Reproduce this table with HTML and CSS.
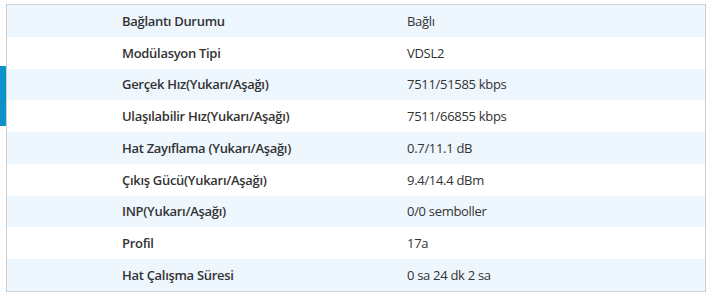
FILE: index.html
```html
<!DOCTYPE html>
<html lang="tr">
<head>
<meta charset="utf-8">
<link rel="stylesheet" href="styles.css">
</head>
<body>
<div class="page">
  <div class="side"><div class="side-mark"></div></div>
  <div class="panel">
    <div class="row"><div class="label">Bağlantı Durumu</div><div class="value">Bağlı</div></div>
    <div class="row"><div class="label">Modülasyon Tipi</div><div class="value">VDSL2</div></div>
    <div class="row"><div class="label">Gerçek Hız(Yukarı/Aşağı)</div><div class="value">7511/51585 kbps</div></div>
    <div class="row"><div class="label">Ulaşılabilir Hız(Yukarı/Aşağı)</div><div class="value">7511/66855 kbps</div></div>
    <div class="row"><div class="label">Hat Zayıflama (Yukarı/Aşağı)</div><div class="value">0.7/11.1 dB</div></div>
    <div class="row"><div class="label">Çıkış Gücü(Yukarı/Aşağı)</div><div class="value">9.4/14.4 dBm</div></div>
    <div class="row"><div class="label">INP(Yukarı/Aşağı)</div><div class="value">0/0 semboller</div></div>
    <div class="row"><div class="label">Profil</div><div class="value">17a</div></div>
    <div class="row"><div class="label">Hat Çalışma Süresi</div><div class="value">0 sa 24 dk 2 sa</div></div>
  </div>
</div>
</body>
</html>
```
FILE: styles.css
```css
html, body {
  margin: 0;
  padding: 0;
  background: #ffffff;
}
body {
  font-family: "Open Sans", "Noto Sans", "Liberation Sans", sans-serif;
  font-size: 13px;
  color: #333333;
}
.page {
  display: flex;
  align-items: flex-start;
  width: 706px;
  height: 301px;
}
.side {
  width: 6px;
  flex: none;
  padding-top: 66px;
}
.side-mark {
  width: 6px;
  height: 60px;
  background: #0e93c8;
}
.panel {
  flex: 1;
  margin-top: 4px;
  border: 1px solid #cfcfcf;
  display: flex;
  flex-direction: column;
}
.row {
  height: 31.75px;
  display: grid;
  grid-template-columns: 400px 1fr;
  align-items: center;
  background: #ffffff;
}
.row:nth-child(odd) {
  background: #eef6fe;
}
.label {
  padding-left: 115px;
  font-weight: 600;
  letter-spacing: -0.3px;
  color: #333333;
}
.value {
  letter-spacing: -0.3px;
  color: #333333;
}
```
